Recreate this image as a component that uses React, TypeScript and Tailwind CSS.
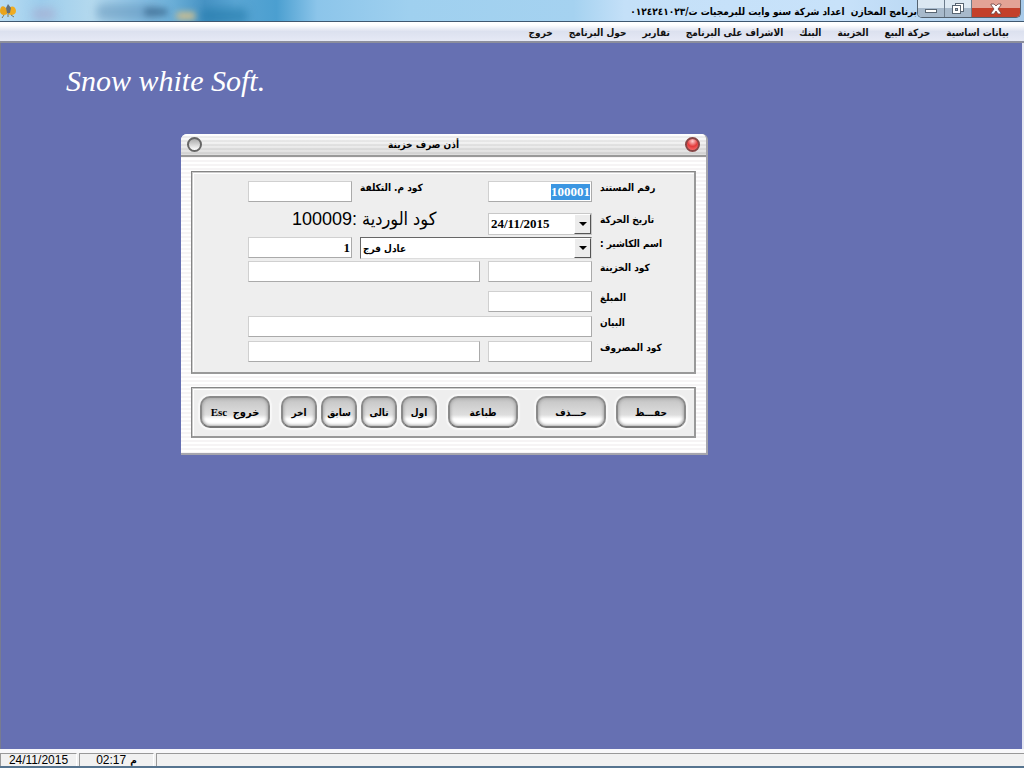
import { useEffect, useRef } from "react"
import type { ReactNode } from "react"
import clsx from "clsx"

const menuItems = [
  "بيانات اساسية",
  "حركة البيع",
  "الخزينة",
  "البنك",
  "الاشراف على البرنامج",
  "تقارير",
  "حول البرنامج",
  "خروج",
]

const arabicFont = "font-['DejaVu_Sans_Condensed','DejaVu_Sans',sans-serif]"
const fieldStyle =
  "h-[21px] w-full min-w-0 border border-[#d0d0d0] border-r-[#aaa] border-b-[#aaa] bg-white px-px text-right font-['Liberation_Serif',serif] text-[13px] font-bold text-black outline-none selection:bg-[#3b96e2] selection:text-white"
const panelStyle = "border border-[#858585] border-r-2 border-b-2 border-r-[#999] border-b-[#999] bg-[#eee] shadow-[inset_1px_1px_0_#ccc,inset_2px_2px_0_#fff]"

function TitleBar() {
  return (
    <header className="relative flex h-[22px] shrink-0 items-start justify-between overflow-hidden border-b border-[#3f5870] bg-[linear-gradient(90deg,#b9dcf2_0%,#9dcdec_4%,#b4d9ee_9%,#86bfe4_14%,#69add6_17%,#4793c4_20%,#5aa6d4_23%,#4b9fd0_27%,#8cc5ea_31%,#9fd0ef_40%,#a5d2f0_56%,#c4e0f8_61%,#c8e2fa_82%,#a9cbea_100%)]">
      <div className="absolute top-2 left-8 h-3 w-6 rounded-full bg-[#a8a9cd]/60 blur-[4px]" />
      <div className="absolute top-1 left-24 h-4 w-16 rounded-full bg-[#5f90b5]/50 blur-[4px]" />
      <div className="absolute top-2 left-36 h-2 w-6 rounded-full bg-[#315d83]/60 blur-[3px]" />
      <div className="absolute top-3 left-44 h-2 w-5 rounded-full bg-[#c9bd91] blur-[3px]" />
      <div className="absolute top-2 left-50 h-4 w-12 rounded-full bg-[#1f78a8]/60 blur-[5px]" />
      <svg className="relative mt-1 h-[14px] w-4" viewBox="0 0 16 14">
        <path d="M7 6C4 0 0 2 0 7c0 4 4 5 7 3z" fill="#e9a51c" />
        <path d="M8 6c3-6 8-3 8 1 0 4-5 5-8 3z" fill="#f0ac20" />
        <path d="M6 4l2-4 3 4-1 5H7z" fill="#667078" />
        <path d="M4 11l-2 3M8 9v4M11 11l3 2" stroke="#7d7a5d" fill="none" />
      </svg>
      <div className="relative flex items-start pr-[3px]">
        <h1 dir="rtl" className={clsx("mt-1 text-[10px] leading-4 font-bold text-black", arabicFont)}>
          برنامج المخازن&nbsp; اعداد شركة سنو وايت للبرمجيات ت/٠١٢٤٢٤١٠٢٣
        </h1>
        <div className="flex h-[18px] overflow-hidden rounded-b-[5px] border border-t-0 border-[#53616f]">
          <button
            type="button"
            aria-label="تصغير"
            className="flex w-[27px] items-center justify-center border-r border-[#6c7c8c] bg-linear-to-b from-[#dce8f2] from-45% to-[#a7b9cb] to-50%"
          >
            <svg className="h-4 w-4" viewBox="0 0 16 16">
              <rect x="2.5" y="8.5" width="11" height="3" fill="#fff" stroke="#586572" />
            </svg>
          </button>
          <button
            type="button"
            aria-label="استعادة"
            className="flex w-[27px] items-center justify-center border-r border-[#6c7c8c] bg-linear-to-b from-[#dce8f2] from-45% to-[#a7b9cb] to-50%"
          >
            <svg className="h-4 w-4" viewBox="0 0 16 16">
              <rect x="5.5" y="2.5" width="8" height="8" fill="#fff" stroke="#586572" />
              <rect x="2.5" y="4.5" width="8" height="8" fill="#fff" stroke="#586572" />
              <rect x="5.5" y="7.5" width="2" height="2" fill="#a7b9cb" stroke="#586572" />
            </svg>
          </button>
          <button
            type="button"
            aria-label="إغلاق"
            className="flex w-[48px] items-center justify-center bg-linear-to-b from-[#e3a396] from-45% to-[#c3402b] to-50%"
          >
            <svg className="h-4 w-4" viewBox="0 0 16 16">
              <path
                d="M3 3h3l2 2 2-2h3v1L10 8l3 4v1h-3l-2-3-2 3H3v-1l3-4-3-4z"
                fill="#fff"
                stroke="#6d4040"
                strokeWidth="0.8"
              />
            </svg>
          </button>
        </div>
      </div>
    </header>
  )
}

function MenuBar() {
  return (
    <nav
      dir="rtl"
      className={clsx(
        "flex h-[21px] shrink-0 items-center gap-4 border-b-2 border-[#8d8f9c] bg-linear-to-b from-white from-15% via-[#dce1ef] via-50% to-[#e6e9f5] px-[15px] pt-[2px] text-[10px] font-bold whitespace-nowrap text-[#111]",
        arabicFont,
      )}
    >
      {menuItems.map((item) => (
        <button key={item} type="button">
          {item}
        </button>
      ))}
    </nav>
  )
}

function FieldLabel({ htmlFor, children }: { htmlFor: string; children: ReactNode }) {
  return (
    <label
      htmlFor={htmlFor}
      dir="rtl"
      className={clsx("justify-self-start text-[10px] leading-[14px] font-bold whitespace-nowrap", arabicFont)}
    >
      {children}
    </label>
  )
}

function DropDown({ id, value, className }: { id: string; value: string; className: string }) {
  return (
    <div className={clsx("relative h-[22px] border bg-white", className)}>
      <select id={id} className="h-full w-full appearance-none bg-transparent pr-5 pl-[2px] outline-none">
        <option>{value}</option>
      </select>
      <span className="pointer-events-none absolute inset-y-0 right-0 flex w-[17px] items-center justify-center border border-white border-r-[#555] border-b-[#555] bg-[#ececec]">
        <svg className="h-1 w-2" viewBox="0 0 8 4">
          <path d="M0 0h8L4 4z" fill="#000" />
        </svg>
      </span>
    </div>
  )
}

function GlossyButton({ wide, children }: { wide?: boolean; children: ReactNode }) {
  return (
    <button
      type="button"
      className={clsx(
        "h-8 rounded-[10px] border-2 border-[#8a8a8a] border-b-[#777] bg-linear-to-b from-[#c4c4c4] via-[#dedede] via-60% to-white to-75% text-[10px] font-bold whitespace-nowrap text-black shadow-[0_0_1px_2px_#f8f8f8,inset_0_0_3px_1px_#aaa]",
        arabicFont,
        wide ? "w-[70px]" : "w-9",
      )}
    >
      {children}
    </button>
  )
}

function VoucherForm() {
  const documentRef = useRef<HTMLInputElement>(null)

  useEffect(() => {
    documentRef.current?.focus()
    documentRef.current?.select()
  }, [])

  return (
    <form
      className={clsx(
        "grid grid-cols-[104px_120px_104px_auto] grid-rows-[32px_24px_24px_30px_25px_25px_22px] items-start gap-x-2 pt-[9px] pr-1 pb-[9px] pl-14",
        panelStyle,
      )}
    >
      <input id="costCode" className={fieldStyle} />
      <FieldLabel htmlFor="costCode">كود م. التكلفة</FieldLabel>
      <input id="document" ref={documentRef} defaultValue="100001" className={fieldStyle} />
      <FieldLabel htmlFor="document">رقم المستند</FieldLabel>

      <p
        dir="rtl"
        className="col-span-2 ml-11 justify-self-start font-['Liberation_Sans','DejaVu_Sans_Condensed','DejaVu_Sans',sans-serif] text-[18px] leading-3 whitespace-nowrap"
      >
        كود الوردية :100009
      </p>
      <DropDown
        id="date"
        value="24/11/2015"
        className="border-[#c8c8c8] font-['Liberation_Serif',serif] text-[13px] font-bold"
      />
      <FieldLabel htmlFor="date">تاريخ الحركة</FieldLabel>

      <input id="cashierCode" aria-label="كود الكاشير" defaultValue="1" className={fieldStyle} />
      <DropDown
        id="cashier"
        value="عادل فرج"
        className={clsx("col-span-2 border-[#ddd] border-t-[#666] border-l-[#666] text-[10px] font-bold", arabicFont)}
      />
      <FieldLabel htmlFor="cashier">اسم الكاشير :</FieldLabel>

      <input aria-label="اسم الخزينة" className={clsx("col-span-2", fieldStyle)} />
      <input id="treasury" className={fieldStyle} />
      <FieldLabel htmlFor="treasury">كود الخزينة</FieldLabel>

      <input id="amount" className={clsx("col-start-3", fieldStyle)} />
      <FieldLabel htmlFor="amount">المبلغ</FieldLabel>

      <input id="statement" className={clsx("col-span-3", fieldStyle)} />
      <FieldLabel htmlFor="statement">البيان</FieldLabel>

      <input aria-label="اسم المصروف" className={clsx("col-span-2", fieldStyle)} />
      <input id="expense" className={fieldStyle} />
      <FieldLabel htmlFor="expense">كود المصروف</FieldLabel>
    </form>
  )
}

function VoucherWindow() {
  return (
    <section className="absolute top-[91px] left-[180px] w-[527px] overflow-hidden rounded-t-md border-r-2 border-b-2 border-[#a6a6ae] bg-[repeating-linear-gradient(180deg,#fff_0_2px,#f6f4f5_2px_4px)]">
      <header className="flex h-[23px] items-center justify-between border-b-2 border-[#999] bg-[linear-gradient(180deg,#fff0,#0002),repeating-linear-gradient(180deg,#fff_0_2px,#f1f1f1_2px_4px)] px-[6px]">
        <button
          type="button"
          aria-label="تصغير النافذة"
          className="size-[15px] rounded-full border-2 border-[#666] bg-linear-to-b from-[#aaa] to-white"
        />
        <h2 dir="rtl" className={clsx("pr-10 text-[10px] leading-4 font-bold", arabicFont)}>
          أذن صرف خزينة
        </h2>
        <button
          type="button"
          aria-label="إغلاق النافذة"
          className="size-[15px] rounded-full border-2 border-[#874646] bg-[radial-gradient(circle_at_50%_20%,#ffd0d0,#e33b3b_50%,#ff7777)]"
        />
      </header>
      <div className="flex flex-col gap-[13px] px-[10px] pt-[14px] pb-[15px]">
        <VoucherForm />
        <div className={clsx("flex h-[51px] items-center justify-between px-2", panelStyle)}>
          <div className="flex gap-[11px]">
            <GlossyButton wide>
              <span dir="rtl" className="font-['Liberation_Serif','DejaVu_Sans_Condensed','DejaVu_Sans',serif] text-[11px]">
                خروج&nbsp; Esc
              </span>
            </GlossyButton>
            <div className="flex gap-1">
              <GlossyButton>اخر</GlossyButton>
              <GlossyButton>سابق</GlossyButton>
              <GlossyButton>تالى</GlossyButton>
              <GlossyButton>اول</GlossyButton>
            </div>
            <GlossyButton wide>طباعة</GlossyButton>
          </div>
          <div className="flex gap-[10px]">
            <GlossyButton wide>حـــذف</GlossyButton>
            <GlossyButton wide>حفـــظ</GlossyButton>
          </div>
        </div>
      </div>
    </section>
  )
}

function StatusBar() {
  const cell = "border-t border-l border-[#999] flex items-center justify-center"

  return (
    <footer className="flex h-[19px] shrink-0 gap-[2px] border-t-4 border-b-2 border-t-[#f8f8fa] border-b-[#56748f] bg-[#f1f1f1] font-['Liberation_Sans','DejaVu_Sans',sans-serif] text-[12px] leading-3 text-black">
      <div className={clsx(cell, "w-[77px] border-r border-r-white")}>24/11/2015</div>
      <div className={clsx(cell, "w-[75px] border-r border-r-white")}>
        02:17 <span className="ml-1 text-[9px] font-bold">م</span>
      </div>
      <div className={clsx(cell, "flex-1")} />
    </footer>
  )
}

export default function App() {
  return (
    <div className="flex h-screen flex-col overflow-hidden bg-[#f1f1f1]">
      <TitleBar />
      <MenuBar />
      <main className="relative flex-1 border-r-2 border-l border-r-[#e4e6f2] border-l-[#777b91] bg-[#6670b2]">
        <p className="px-[65px] pt-5 font-['Liberation_Serif',serif] text-[30px] leading-9 text-white italic">
          Snow white Soft.
        </p>
        <VoucherWindow />
      </main>
      <StatusBar />
    </div>
  )
}
